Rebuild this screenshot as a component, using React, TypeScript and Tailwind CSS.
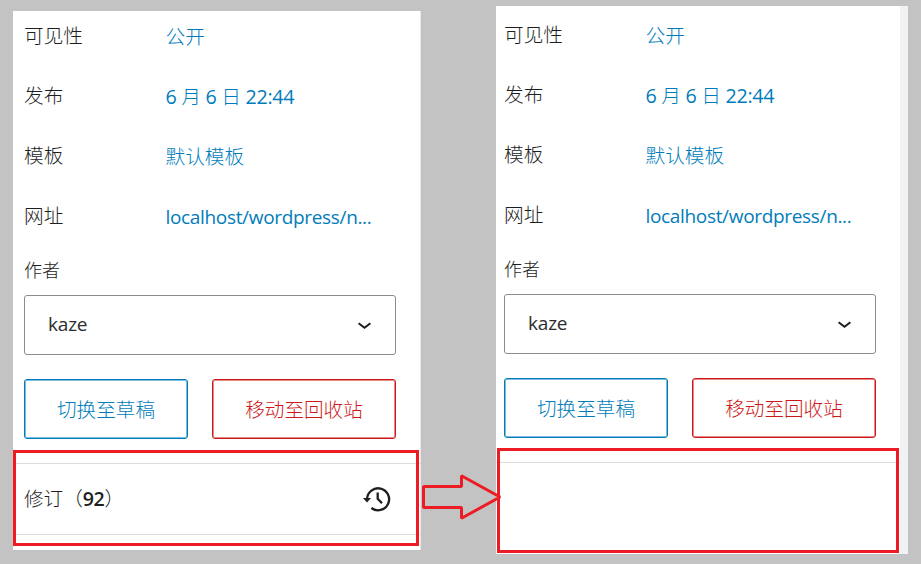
import React from 'react';

const LATIN = "font-['Open_Sans','Noto_Sans_CJK_SC',sans-serif]";

type Row = { label: string; value: React.ReactNode };

const rows: Row[] = [
  { label: '可见性', value: '公开' },
  {
    label: '发布',
    value: (
      <span className="tracking-[-0.3px]">
        <span className="font-normal">6</span> 月 <span className="font-normal">6</span> 日{' '}
        <span className="font-normal">22:44</span>
      </span>
    ),
  },
  { label: '模板', value: '默认模板' },
  {
    label: '网址',
    value: <span className="text-[19px] font-normal tracking-[-0.33px]">localhost/wordpress/n...</span>,
  },
];

function Chevron() {
  return (
    <svg width="14" height="9" viewBox="0 0 14 9" fill="none" className="shrink-0">
      <path d="M1.6 2.2 7.5 6.8l5.9-4.6" stroke="#1e1e1e" strokeWidth="2" />
    </svg>
  );
}

function HistoryIcon() {
  return (
    <svg width="28" height="26" viewBox="0 0 28 26" fill="none" className="shrink-0">
      <path d="M4.1 13A11 11 0 1 1 8.4 22" stroke="#1e1e1e" strokeWidth="2.3" />
      <path d="M0 12h8L4 16.6z" fill="#1e1e1e" />
      <path d="M14.7 6.6v6.2l4.3 4.4" stroke="#1e1e1e" strokeWidth="2.3" />
    </svg>
  );
}

function Details({ first }: { first: string }) {
  return (
    <div className="w-[372px]">
      {rows.map((row, i) => (
        <div key={row.label} className={`flex items-center ${i === 0 ? first : 'h-[60px]'}`}>
          <div className="w-[141.5px] pb-0.5 text-[19.7px] leading-7 text-[#1e1e1e]">{row.label}</div>
          <div className="whitespace-nowrap text-[19.7px] leading-7 text-[#007cba]">{row.value}</div>
        </div>
      ))}
      <div className="flex h-12 items-center pb-0.5 text-[18px] text-[#1e1e1e]">作者</div>
      <div className="flex h-[60px] items-center justify-between rounded-[3px] border border-[#8c8c8c] pl-[23px] pr-6 text-[19px] text-[#2c2c2c]">
        <span className="pb-px font-normal tracking-[-0.2px]">kaze</span>
        <Chevron />
      </div>
      <div className="mt-6 flex justify-between text-[19.6px]">
        <button className="h-[60px] w-[164px] rounded-[3px] border-[1.5px] border-[#007cba] pt-0.5 text-[#007cba] shadow-[inset_0_0_0_1px_#7fbddc]">
          切换至草稿
        </button>
        <button className="h-[60px] w-[184px] rounded-[3px] border-[1.5px] border-[#cc1818] pt-0.5 text-[#cc1818] shadow-[inset_0_0_0_1px_#e58b8b]">
          移动至回收站
        </button>
      </div>
    </div>
  );
}

export default function App() {
  return (
    <div className={`relative flex h-[564px] w-[921px] items-start bg-[#c3c3c3] pl-[13px] font-light ${LATIN}`}>
      <section className="relative mt-[11px] h-[539px] w-[408px] border-r border-[#e8e8e8] bg-white">
        <div className="pl-[11px]">
          <Details first="h-14 pb-1" />
        </div>
        <div className="mt-6 flex h-[72px] items-center justify-between border-y border-[#ddd] pl-[11px] pr-[29px] text-[19.6px] text-[#1e1e1e]">
          <span className="whitespace-nowrap">
            修订（<span className="font-semibold tracking-[-0.4px]">92</span>）
          </span>
          <HistoryIcon />
        </div>
        <div className="absolute left-0 top-[439px] h-[96px] w-[406px] border-[3px] border-[#ed1c24]" />
      </section>

      <section className="relative ml-[75px] mt-[6px] flex h-[548px] w-[412px] bg-white">
        <div className="w-[404px]">
          <div className="pl-2">
            <Details first="h-[60px]" />
          </div>
          <div className="mt-6 border-t border-[#ddd]" />
        </div>
        <div className="w-2 bg-[#f0f2f4]" />
        <div className="absolute left-px top-[442px] h-[105px] w-[402px] border-[3px] border-[#ed1c24]" />
      </section>

      <svg
        className="absolute left-[421px] top-[472px]"
        width="82"
        height="50"
        viewBox="0 0 82 50"
        fill="none"
      >
        <path
          d="M2.5 14.5H40.5V3.7L79 25 40.5 46.3V35.5H2.5z"
          stroke="#ed1c24"
          strokeWidth="3"
          strokeLinejoin="bevel"
        />
      </svg>
    </div>
  );
}
